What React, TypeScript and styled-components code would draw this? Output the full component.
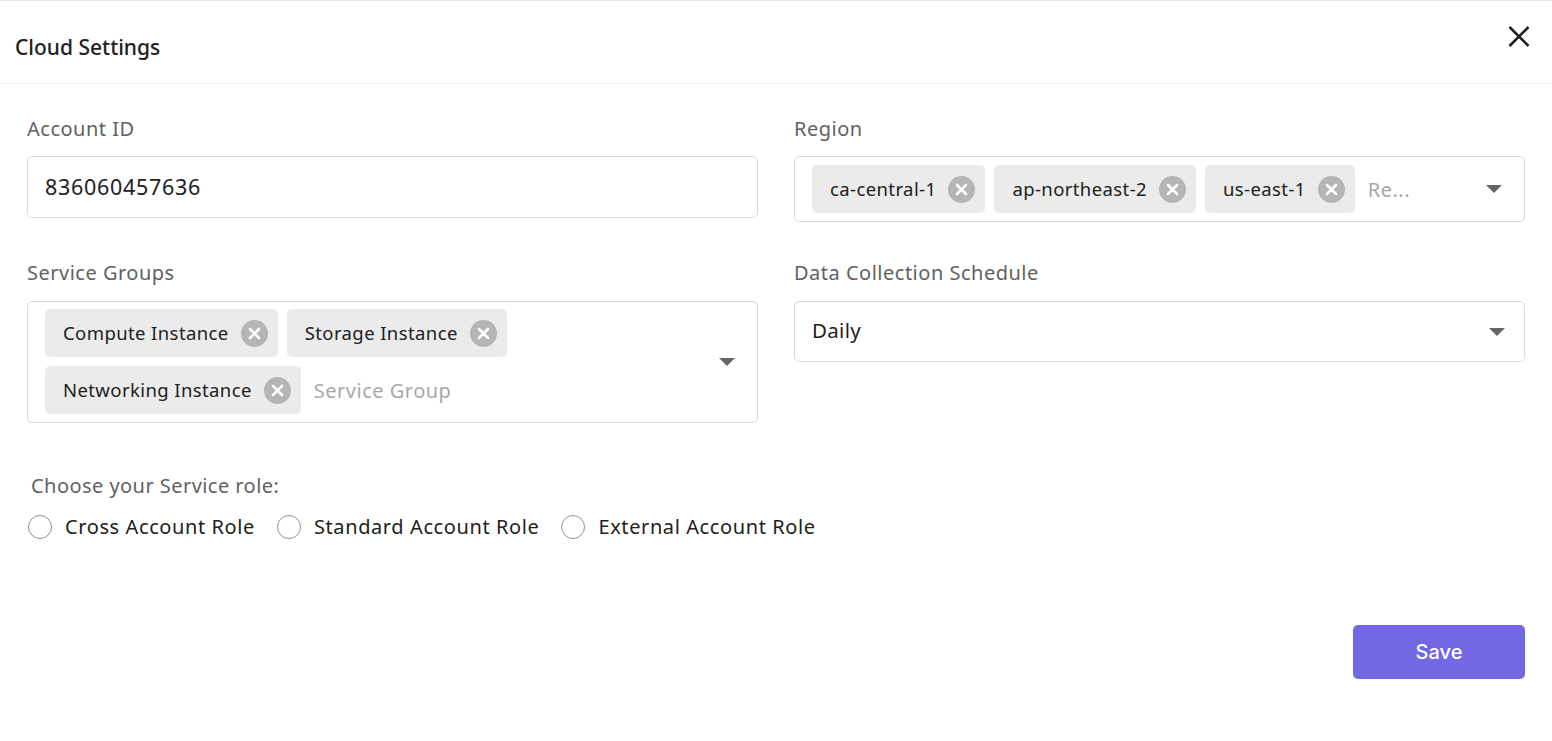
import React from 'react'
import styled, { createGlobalStyle } from 'styled-components'

const GlobalStyle = createGlobalStyle`
  html, body {
    margin: 0;
    padding: 0;
    background: #fff;
  }
  * {
    box-sizing: border-box;
  }
`

const Page = styled.div`
  width: 1552px;
  height: 741px;
  overflow: hidden;
  font-family: "Noto Sans", sans-serif;
  color: #212121;
  background: #fff;
  border-top: 1px solid #e4e9f2;
`

const Header = styled.div`
  height: 83px;
  display: flex;
  justify-content: space-between;
  align-items: flex-start;
  padding: 0 21px 0 15px;
  border-bottom: 1px solid #e9ecf1;
`

const Title = styled.h1`
  margin: 32px 0 0;
  font-size: 21px;
  line-height: 28px;
  font-weight: 500;
  color: #212121;
`

const CloseButton = styled.button`
  margin-top: 23px;
  padding: 0;
  width: 24px;
  height: 26px;
  border: 0;
  background: none;
  color: #212121;
`

const Body = styled.div`
  padding: 31px 27px 0;
`

const FormGrid = styled.div`
  display: grid;
  grid-template-columns: 731px 731px;
  column-gap: 36px;
`

const Field = styled.div<{ $height: number }>`
  height: ${p => p.$height}px;
`

const Label = styled.div<{ $gap: number }>`
  font-size: 20px;
  line-height: 28px;
  letter-spacing: 0.5px;
  color: #616161;
  margin-bottom: ${p => p.$gap}px;
`

const Box = styled.div<{ $height: number }>`
  height: ${p => p.$height}px;
  border: 1px solid #d9d9d9;
  border-radius: 5px;
  display: flex;
  align-items: center;
  background: #fff;
`

const InputText = styled.div<{ $size: number; $spacing: number; $lift: number; $grow?: boolean }>`
  flex: ${p => (p.$grow ? 1 : 'none')};
  padding: 0 0 ${p => p.$lift}px 17px;
  font-size: ${p => p.$size}px;
  line-height: 28px;
  letter-spacing: ${p => p.$spacing}px;
  color: #212121;
`

const ChipArea = styled.div<{ $top: number }>`
  flex: 1;
  align-self: flex-start;
  display: flex;
  flex-wrap: wrap;
  align-items: center;
  gap: 9px;
  padding: ${p => p.$top}px 0 0 17px;
`

const Chip = styled.div`
  height: 48px;
  display: flex;
  align-items: center;
  gap: 12px;
  padding: 0 10px 0 18px;
  background: #ebebeb;
  border-radius: 5px;
  font-size: 18.5px;
  letter-spacing: 0.4px;
  color: #212121;
  white-space: nowrap;
`

const ChipLabel = styled.span`
  margin-bottom: 2px;
`

const ChipClose = styled.span`
  width: 27px;
  height: 27px;
  display: flex;
  align-items: center;
  justify-content: center;
  border-radius: 50%;
  background: #b5b5b5;
`

const Placeholder = styled.span`
  margin-left: 4px;
  font-size: 20px;
  letter-spacing: 0.5px;
  color: #a8a8a8;
`

const Caret = styled.span<{ $right: number }>`
  width: 0;
  height: 0;
  margin-right: ${p => p.$right}px;
  border-left: 8px solid transparent;
  border-right: 8px solid transparent;
  border-top: 8px solid #666;
`

const RoleSection = styled.div`
  margin-top: 49px;
`

const RoleLabel = styled.div`
  padding-left: 4px;
  font-size: 20px;
  line-height: 28px;
  letter-spacing: 0.45px;
  color: #616161;
`

const RoleRow = styled.div`
  display: flex;
  gap: 21px;
  margin-top: 13px;
`

const RoleOption = styled.label`
  display: flex;
  align-items: center;
  gap: 13px;
  font-size: 20px;
  line-height: 28px;
  letter-spacing: 0.6px;
  color: #212121;
`

const RadioDot = styled.span`
  width: 24px;
  height: 24px;
  margin-left: 1px;
  border: 1px solid #8f8f8f;
  border-radius: 50%;
`

const Footer = styled.div`
  display: flex;
  justify-content: flex-end;
  margin-top: 84px;
`

const SaveButton = styled.button`
  width: 172px;
  height: 54px;
  padding: 0 0 1px;
  border: 0;
  border-radius: 5px;
  background: #7367e4;
  color: #fff;
  font-family: Inter, sans-serif;
  font-size: 20px;
  font-weight: 500;
`

const RemoveIcon = () => (
  <svg width="13" height="13" viewBox="0 0 13 13">
    <path d="M2 2 L11 11 M11 2 L2 11" stroke="#fff" strokeWidth="2.6" strokeLinecap="round" />
  </svg>
)

const TagChip = ({ label }: { label: string }) => (
  <Chip>
    <ChipLabel>{label}</ChipLabel>
    <ChipClose>
      <RemoveIcon />
    </ChipClose>
  </Chip>
)

const regions = ['ca-central-1', 'ap-northeast-2', 'us-east-1']
const groups = ['Compute Instance', 'Storage Instance', 'Networking Instance']
const roles = ['Cross Account Role', 'Standard Account Role', 'External Account Role']

export default function App() {
  return (
    <Page>
      <GlobalStyle />
      <Header>
        <Title>Cloud Settings</Title>
        <CloseButton aria-label="Close">
          <svg width="24" height="24" viewBox="0 0 24 24">
            <path d="M2.5 3 L21.5 22 M21.5 3 L2.5 22" stroke="#212121" strokeWidth="2.6" />
          </svg>
        </CloseButton>
      </Header>
      <Body>
        <FormGrid>
          <Field $height={144}>
            <Label $gap={13}>Account ID</Label>
            <Box $height={62}>
              <InputText $size={21.5} $spacing={0.7} $lift={0}>836060457636</InputText>
            </Box>
          </Field>
          <Field $height={144}>
            <Label $gap={13}>Region</Label>
            <Box $height={66}>
              <ChipArea $top={8}>
                {regions.map(r => <TagChip key={r} label={r} />)}
                <Placeholder>Re...</Placeholder>
              </ChipArea>
              <Caret $right={22} />
            </Box>
          </Field>
          <Field $height={164}>
            <Label $gap={14}>Service Groups</Label>
            <Box $height={122}>
              <ChipArea $top={7}>
                {groups.map(g => <TagChip key={g} label={g} />)}
                <Placeholder>Service Group</Placeholder>
              </ChipArea>
              <Caret $right={22} />
            </Box>
          </Field>
          <Field $height={164}>
            <Label $gap={14}>Data Collection Schedule</Label>
            <Box $height={61}>
              <InputText $size={20.5} $spacing={0.3} $lift={3} $grow>Daily</InputText>
              <Caret $right={19} />
            </Box>
          </Field>
        </FormGrid>
        <RoleSection>
          <RoleLabel>Choose your Service role:</RoleLabel>
          <RoleRow>
            {roles.map(r => (
              <RoleOption key={r}>
                <RadioDot />
                {r}
              </RoleOption>
            ))}
          </RoleRow>
        </RoleSection>
        <Footer>
          <SaveButton>Save</SaveButton>
        </Footer>
      </Body>
    </Page>
  )
}
